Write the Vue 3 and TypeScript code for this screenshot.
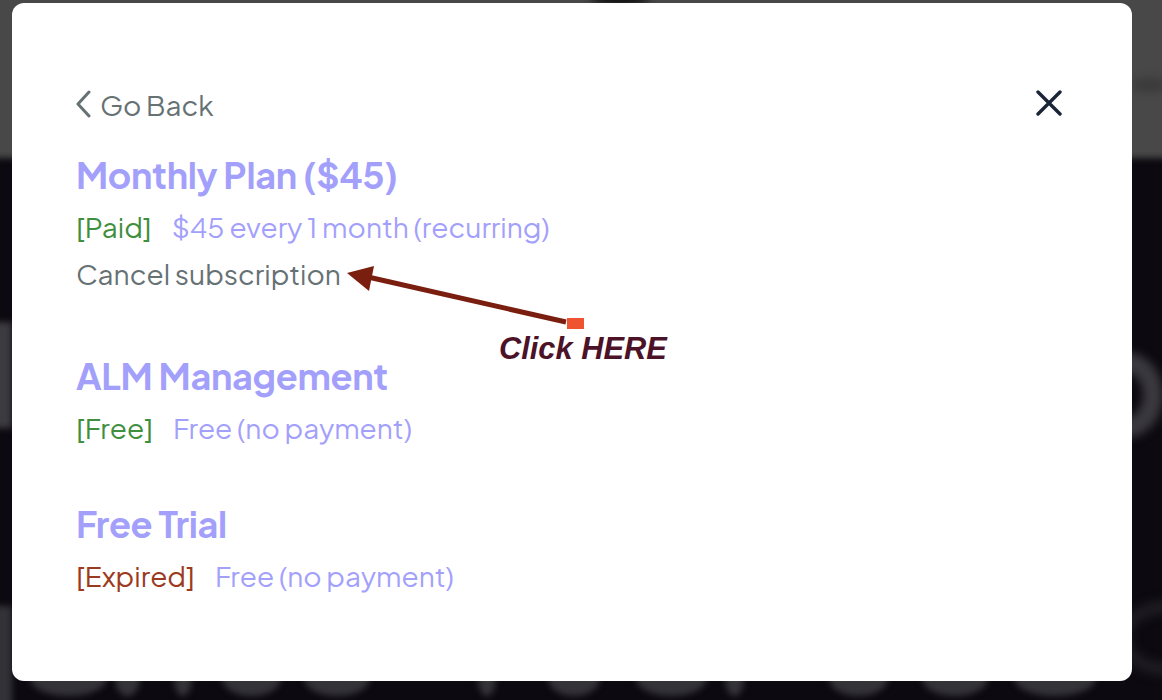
<script setup lang="ts">
interface Plan {
  title: string
  status: string
  kind: 'ok' | 'bad'
  detail: string
  cancel?: boolean
}
const plans: Plan[] = [
  { title: 'Monthly Plan ($45)', status: '[Paid]', kind: 'ok', detail: '$45 every 1 month (recurring)', cancel: true },
  { title: 'ALM Management', status: '[Free]', kind: 'ok', detail: 'Free (no payment)' },
  { title: 'Free Trial', status: '[Expired]', kind: 'bad', detail: 'Free (no payment)' },
]
const bumps: [number, number][] = [
  [30, 77], [115, 25], [174, 18], [222, 59], [304, 66], [478, 18], [548, 52],
  [636, 71], [725, 19], [829, 59], [922, 66], [1014, 82],
]
const bumpStyle = (b: [number, number]) => ({ left: `${b[0]}px`, width: `${b[1]}px` })
</script>

<template>
  <div class="screen">
    <div class="backdrop" aria-hidden="true">
      <div class="band"></div>
      <div class="band-spot spot-a"></div>
      <div class="band-spot spot-b"></div>
      <div class="ring ring-right"></div>
      <div class="side side-left"></div>
      <div class="side side-low"></div>
      <div class="ring ring-low"></div>
      <span v-for="b in bumps" :key="b[0]" class="bump" :style="bumpStyle(b)"></span>
    </div>
    <main class="modal">
      <header class="top">
        <a class="back">
          <svg class="chev" width="16" height="28" viewBox="0 0 16 28" fill="none">
            <path d="M14 2 3 14 14 26" stroke="#667174" stroke-width="3" stroke-linecap="round" stroke-linejoin="round" />
          </svg>
          <span>Go Back</span>
        </a>
        <svg class="close" width="26" height="26" viewBox="0 0 26 26" fill="none">
          <path d="M2 2 24 24M24 2 2 24" stroke="#1b2537" stroke-width="3.400" stroke-linecap="round" />
        </svg>
      </header>
      <section v-for="p in plans" :key="p.title" class="plan">
        <h2 class="title">{{ p.title }}</h2>
        <p class="line">
          <span :class="p.kind">{{ p.status }}</span>
          <span class="detail">{{ p.detail }}</span>
        </p>
        <p v-if="p.cancel" class="cancel">Cancel subscription</p>
      </section>
    </main>
    <div class="note">
      <svg class="arrow" width="1162" height="700" viewBox="0 0 1162 700" fill="none">
        <path d="M566 322 368 277" stroke="#7a1f10" stroke-width="5" />
        <path d="M347 273 374 266 369 291Z" fill="#7a1f10" />
        <rect x="567" y="318" width="17" height="11" fill="#ee5430" />
      </svg>
      <span class="click">Click HERE</span>
    </div>
  </div>
</template>

<style>
html, body { margin: 0; background: #0c0a10; }
</style>

<style scoped>
.screen {
  position: relative;
  width: 1162px;
  height: 700px;
  overflow: hidden;
  background: #0c0a10;
  box-sizing: border-box;
  padding: 3px 30px 19px 12px;
  font-family: "Plus Jakarta Sans", Inter, "Noto Sans", sans-serif;
}
.backdrop { position: absolute; inset: 0; overflow: hidden; }
.band {
  position: absolute; left: -20px; right: -20px; top: -20px; height: 178px;
  background: #484848; filter: blur(3px);
}
.band-spot { position: absolute; border-radius: 50%; filter: blur(5px); }
.spot-a { left: 590px; top: -8px; width: 60px; height: 12px; background: #050505; }
.spot-b { left: 1130px; top: 78px; width: 40px; height: 14px; background: #3a3a3a; }
.ring {
  position: absolute; border-radius: 50%; border: 20px solid #3a393e; filter: blur(5px);
  box-sizing: border-box;
}
.ring-right { left: 1087px; top: 352px; width: 76px; height: 86px; }
.ring-low { left: 1120px; top: 603px; width: 90px; height: 70px; border-width: 8px; border-color: #29282d; filter: blur(6px); }
.side { position: absolute; left: -8px; width: 20px; filter: blur(3px); }
.side-left { top: 322px; height: 106px; background: #3c3b40; }
.side-low { top: 606px; height: 110px; background: #333237; }
.bump {
  position: absolute; top: 660px; height: 36px; border-radius: 50%;
  background: #343338; filter: blur(3px);
}
.modal {
  position: relative;
  box-sizing: border-box;
  width: 1120px;
  height: 678px;
  background: #fff;
  border-radius: 12px;
  padding: 83px 70px 0 64px;
}
.top {
  display: flex;
  justify-content: space-between;
  align-items: center;
  height: 37px;
}
.back {
  display: flex;
  align-items: center;
  gap: 9px;
  margin-left: -1px;
  color: #667174;
  font-size: 28px;
}
.chev { width: 16px; height: 28px; margin-top: -2px; }
.close { margin-bottom: 4px; }
.plan { margin-top: 30px; }
.plan + .plan { margin-top: 54px; }
.title {
  margin: 0;
  font-size: 36px;
  line-height: 44px;
  font-weight: 700;
  color: #a3a0fb;
  letter-spacing: -0.3px;
}
.line {
  margin: 10px 0 0;
  font-size: 28px;
  line-height: 40px;
  display: flex;
  gap: 20px;
}
.ok { color: #3f8f3f; }
.bad { color: #9c3a20; }
.detail { color: #a3a0fb; }
.cancel { margin: 7px 0 0; padding-bottom: 6px; font-size: 28px; line-height: 40px; color: #667174; }
.note { position: absolute; inset: 0; pointer-events: none; }
.arrow { position: absolute; left: 0; top: 0; }
.click {
  position: absolute;
  left: 499px;
  top: 330px;
  font: italic 700 30.8px/38px "Liberation Sans", Arial, sans-serif;
  color: #4c1228;
}
</style>
